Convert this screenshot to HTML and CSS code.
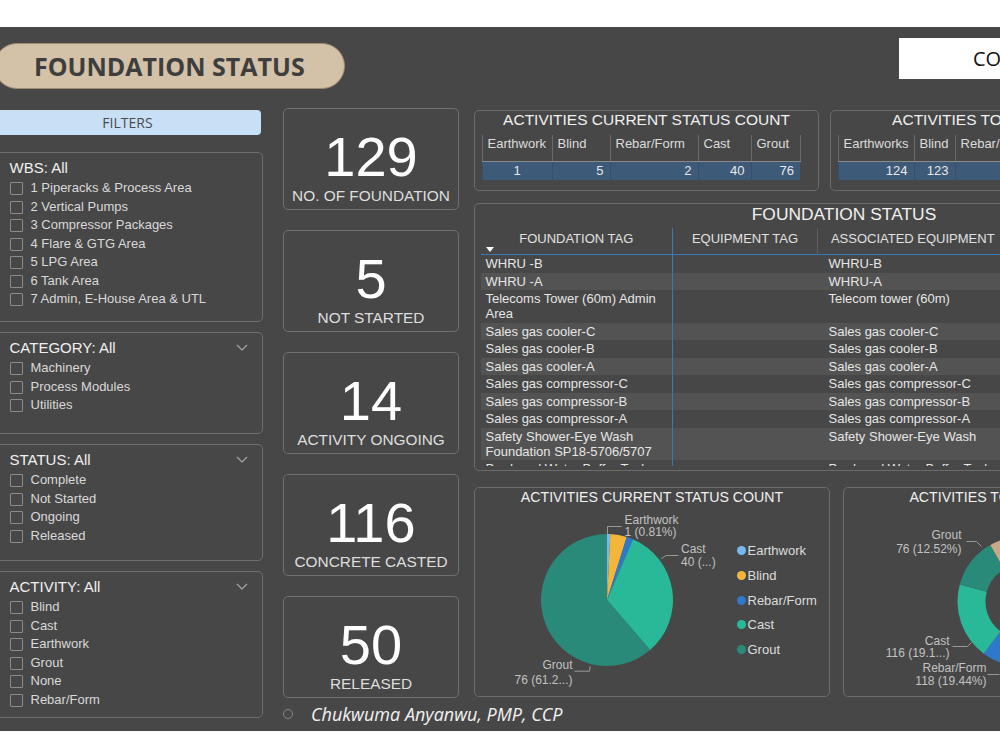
FILE: index.html
```html
<!DOCTYPE html>
<html lang="en">
<head>
    <meta charset="UTF-8">
    <title>Foundation Status</title>
    <link rel="stylesheet" href="styles.css">
</head>
<body>
    <div class="top-strip"></div>

    <main class="board">
        <header class="board-head">
            <h1 class="title-pill">FOUNDATION STATUS</h1>
            <div class="head-box">CONSTRUCTION PROGRESS</div>
        </header>

        <div class="board-body">
            <!-- slicers -->
            <aside class="filters">
                <div class="filters-btn">FILTERS</div>

                <section class="slicer slicer-wbs">
                    <div class="slicer-head"><span>WBS: All</span></div>
                    <ul class="slicer-list">
                        <li><span class="check"></span>1 Piperacks &amp; Process Area</li>
                        <li><span class="check"></span>2 Vertical Pumps</li>
                        <li><span class="check"></span>3 Compressor Packages</li>
                        <li><span class="check"></span>4 Flare &amp; GTG Area</li>
                        <li><span class="check"></span>5 LPG Area</li>
                        <li><span class="check"></span>6 Tank Area</li>
                        <li><span class="check"></span>7 Admin, E-House Area &amp; UTL</li>
                    </ul>
                </section>

                <section class="slicer slicer-category">
                    <div class="slicer-head">
                        <span>CATEGORY: All</span>
                        <svg class="chevron" width="12" height="7" viewBox="0 0 12 7"><polyline points="1,1 6,6 11,1"/></svg>
                    </div>
                    <ul class="slicer-list">
                        <li><span class="check"></span>Machinery</li>
                        <li><span class="check"></span>Process Modules</li>
                        <li><span class="check"></span>Utilities</li>
                    </ul>
                </section>

                <section class="slicer slicer-status">
                    <div class="slicer-head">
                        <span>STATUS: All</span>
                        <svg class="chevron" width="12" height="7" viewBox="0 0 12 7"><polyline points="1,1 6,6 11,1"/></svg>
                    </div>
                    <ul class="slicer-list">
                        <li><span class="check"></span>Complete</li>
                        <li><span class="check"></span>Not Started</li>
                        <li><span class="check"></span>Ongoing</li>
                        <li><span class="check"></span>Released</li>
                    </ul>
                </section>

                <section class="slicer slicer-activity">
                    <div class="slicer-head">
                        <span>ACTIVITY: All</span>
                        <svg class="chevron" width="12" height="7" viewBox="0 0 12 7"><polyline points="1,1 6,6 11,1"/></svg>
                    </div>
                    <ul class="slicer-list">
                        <li><span class="check"></span>Blind</li>
                        <li><span class="check"></span>Cast</li>
                        <li><span class="check"></span>Earthwork</li>
                        <li><span class="check"></span>Grout</li>
                        <li><span class="check"></span>None</li>
                        <li><span class="check"></span>Rebar/Form</li>
                    </ul>
                </section>
            </aside>

            <!-- kpi cards -->
            <div class="kpis">
                <div class="cards">
                    <div class="card"><div class="card-value">129</div><div class="card-label">NO. OF FOUNDATION</div></div>
                    <div class="card"><div class="card-value">5</div><div class="card-label">NOT STARTED</div></div>
                    <div class="card"><div class="card-value">14</div><div class="card-label">ACTIVITY ONGOING</div></div>
                    <div class="card"><div class="card-value">116</div><div class="card-label">CONCRETE CASTED</div></div>
                    <div class="card"><div class="card-value">50</div><div class="card-label">RELEASED</div></div>
                </div>
                <div class="credit"><span class="credit-dot"></span>Chukwuma Anyanwu, PMP, CCP</div>
            </div>

            <!-- tables and charts -->
            <div class="visuals">
                <div class="count-row">
                    <section class="panel count-panel count-current">
                        <h2 class="panel-title">ACTIVITIES CURRENT STATUS COUNT</h2>
                        <table class="count-table">
                            <tr><th>Earthwork</th><th>Blind</th><th>Rebar/Form</th><th>Cast</th><th>Grout</th></tr>
                            <tr><td class="centered">1</td><td>5</td><td>2</td><td>40</td><td>76</td></tr>
                        </table>
                    </section>
                    <section class="panel count-panel count-total">
                        <h2 class="panel-title">ACTIVITIES TOTAL COUNT</h2>
                        <table class="count-table">
                            <tr><th>Earthworks</th><th>Blind</th><th>Rebar/Form</th><th>Cast</th><th>Grout</th></tr>
                            <tr><td>124</td><td>123</td><td>118</td><td>116</td><td>76</td></tr>
                        </table>
                    </section>
                </div>

                <section class="panel status-panel">
                    <h2 class="panel-title status-title">FOUNDATION STATUS</h2>
                    <div class="status-scroll">
                        <table class="status-table">
                            <thead>
                                <tr>
                                    <th>FOUNDATION TAG<span class="sort-caret"></span></th>
                                    <th>EQUIPMENT TAG</th>
                                    <th>ASSOCIATED EQUIPMENT</th>
                                </tr>
                            </thead>
                            <tbody>
                                <tr><td>WHRU -B</td><td></td><td>WHRU-B</td></tr>
                                <tr><td>WHRU -A</td><td></td><td>WHRU-A</td></tr>
                                <tr><td>Telecoms Tower (60m) Admin Area</td><td></td><td>Telecom tower (60m)</td></tr>
                                <tr><td>Sales gas cooler-C</td><td></td><td>Sales gas cooler-C</td></tr>
                                <tr><td>Sales gas cooler-B</td><td></td><td>Sales gas cooler-B</td></tr>
                                <tr><td>Sales gas cooler-A</td><td></td><td>Sales gas cooler-A</td></tr>
                                <tr><td>Sales gas compressor-C</td><td></td><td>Sales gas compressor-C</td></tr>
                                <tr><td>Sales gas compressor-B</td><td></td><td>Sales gas compressor-B</td></tr>
                                <tr><td>Sales gas compressor-A</td><td></td><td>Sales gas compressor-A</td></tr>
                                <tr><td>Safety Shower-Eye Wash Foundation SP18-5706/5707</td><td></td><td>Safety Shower-Eye Wash</td></tr>
                                <tr><td>Produced Water Buffer Tank</td><td></td><td>Produced Water Buffer Tank</td></tr>
                            </tbody>
                        </table>
                    </div>
                </section>

                <div class="chart-row">
                    <section class="panel chart-panel pie-panel">
                        <h2 class="panel-title chart-title">ACTIVITIES CURRENT STATUS COUNT</h2>
                        <div class="chart-body">
                            <svg class="chart-svg" width="250" height="187" viewBox="0 0 250 187">
                                <g transform="translate(132 94)">
                                    <path class="slice-earthwork" d="M0 0 L0 -66 A66 66 0 0 1 3.34 -65.92 Z"/>
                                    <path class="slice-blind" d="M0 0 L3.34 -65.92 A66 66 0 0 1 19.76 -62.97 Z"/>
                                    <path class="slice-rebar" d="M0 0 L19.76 -62.97 A66 66 0 0 1 26.03 -60.65 Z"/>
                                    <path class="slice-cast" d="M0 0 L26.03 -60.65 A66 66 0 0 1 43 50.07 Z"/>
                                    <path class="slice-grout" d="M0 0 L43 50.07 A66 66 0 1 1 0 -66 Z"/>
                                </g>
                                <polyline class="leader" points="132.5,28.5 132.5,20.5 146.5,20.5"/>
                                <polyline class="leader" points="186.2,52.5 191.2,49.5 203.5,49.5"/>
                                <polyline class="leader" points="99.5,165.2 114.5,165.2 115.2,160.2"/>
                                <text class="chart-label" x="149.5" y="17.5">Earthwork</text>
                                <text class="chart-label" x="149.5" y="30">1 (0.81%)</text>
                                <text class="chart-label" x="206" y="46.5">Cast</text>
                                <text class="chart-label" x="206" y="59.5">40 (...)</text>
                                <text class="chart-label end" x="97.5" y="162.5">Grout</text>
                                <text class="chart-label end" x="97.5" y="177.5">76 (61.2...)</text>
                            </svg>
                            <ul class="legend">
                                <li><span class="legend-dot dot-earthwork"></span>Earthwork</li>
                                <li><span class="legend-dot dot-blind"></span>Blind</li>
                                <li><span class="legend-dot dot-rebar"></span>Rebar/Form</li>
                                <li><span class="legend-dot dot-cast"></span>Cast</li>
                                <li><span class="legend-dot dot-grout"></span>Grout</li>
                            </ul>
                        </div>
                    </section>

                    <section class="panel chart-panel donut-panel">
                        <h2 class="panel-title chart-title">ACTIVITIES TOTAL COUNT</h2>
                        <div class="chart-body">
                            <svg class="chart-svg" width="300" height="187" viewBox="0 0 300 187">
                                <g transform="translate(178.5 95.5)">
                                    <path class="slice-earthwork" d="M0 -65 A65 65 0 0 1 62.34 -18.42 L35.48 -10.49 A37 37 0 0 0 0 -37 Z"/>
                                    <path class="slice-blind" d="M62.34 -18.42 A65 65 0 0 1 35.89 54.19 L20.43 30.85 A37 37 0 0 0 35.48 -10.49 Z"/>
                                    <path class="slice-rebar" d="M35.89 54.19 A65 65 0 0 1 -38.64 52.27 L-21.99 29.76 A37 37 0 0 0 20.43 30.85 Z"/>
                                    <path class="slice-cast" d="M-38.64 52.27 A65 65 0 0 1 -62.71 -17.12 L-35.69 -9.75 A37 37 0 0 0 -21.99 29.76 Z"/>
                                    <path class="slice-grout" d="M-62.71 -17.12 A65 65 0 0 1 -32.16 -56.49 L-18.31 -32.15 A37 37 0 0 0 -35.69 -9.75 Z"/>
                                    <path class="slice-released" d="M-32.16 -56.49 A65 65 0 0 1 0 -65 L0 -37 A37 37 0 0 0 -18.31 -32.15 Z"/>
                                </g>
                                <polyline class="leader" points="122.5,35.5 132.5,35.5 137.5,40.5"/>
                                <polyline class="leader" points="108.5,140.5 123.5,140.5 127.5,136.5"/>
                                <polyline class="leader" points="143.5,168.5 155.5,168.5"/>
                                <text class="chart-label end" x="117.5" y="32.5">Grout</text>
                                <text class="chart-label end" x="117.5" y="46.5">76 (12.52%)</text>
                                <text class="chart-label end" x="105.5" y="138.5">Cast</text>
                                <text class="chart-label end" x="105.5" y="150.5">116 (19.1...)</text>
                                <text class="chart-label end" x="142.5" y="165.5">Rebar/Form</text>
                                <text class="chart-label end" x="142.5" y="178.5">118 (19.44%)</text>
                            </svg>
                        </div>
                    </section>
                </div>
            </div>
        </div>
    </main>
</body>
</html>
```

FILE: styles.css
```css
* {
    margin: 0;
    padding: 0;
    box-sizing: border-box;
}

body {
    width: 1000px;
    height: 750px;
    overflow: hidden;
    background: #fff;
    font-family: "Liberation Sans", Arial, sans-serif;
    color: #e6e6e6;
}

.top-strip {
    height: 27px;
}

.board {
    width: 1240px;
    height: 704px;
    margin-left: -6px;
    padding-top: 11px;
    background: #474747;
}

/* header */
.board-head {
    display: flex;
    align-items: flex-start;
}

.title-pill {
    width: 351px;
    height: 46px;
    margin-top: 5px;
    padding-left: 39px;
    display: flex;
    align-items: center;
    border-radius: 23px;
    background: #d3c1a8;
    border: 1.5px solid #a08c72;
    font-family: "Open Sans", sans-serif;
    font-weight: 700;
    font-size: 25px;
    color: #3e3e3e;
}

.head-box {
    margin-left: auto;
    width: 335px;
    height: 41px;
    padding-left: 74px;
    display: flex;
    align-items: center;
    background: #fff;
    color: #111;
    font-family: "Open Sans", sans-serif;
    font-size: 20px;
    white-space: nowrap;
}

.board-body {
    display: flex;
    align-items: flex-start;
    margin-top: 19px;
}

/* slicers */
.filters {
    width: 269px;
    margin-right: 20px;
}

.filters-btn {
    width: 267px;
    height: 25px;
    margin-top: 2px;
    border-radius: 4px;
    background: #c7e0f6;
    color: #4a4a4a;
    font-family: "Open Sans", sans-serif;
    font-size: 14px;
    line-height: 25px;
    text-align: center;
}

.slicer {
    margin-top: 10px;
    padding: 4.5px 14.5px 0;
    border: 1.5px solid #6e6e6e;
    border-radius: 5px;
}

.slicer-wbs { margin-top: 17px; height: 170px; }
.slicer-category { height: 102px; }
.slicer-status { height: 117px; }
.slicer-activity { height: 147px; }

.slicer-head {
    display: flex;
    justify-content: space-between;
    align-items: center;
    font-size: 15px;
    line-height: 20px;
    color: #f0f0f0;
}

.chevron {
    fill: none;
    stroke: #a8a8a8;
    stroke-width: 1.2;
}

.slicer-list {
    list-style: none;
    margin-top: 1.75px;
}

.slicer-list li {
    display: flex;
    align-items: center;
    font-size: 13px;
    line-height: 18.5px;
    color: #d9d9d9;
}

.check {
    width: 13px;
    height: 13px;
    margin-right: 8px;
    border: 1px solid #8c8c8c;
    border-radius: 1px;
}

/* kpi cards */
.kpis {
    width: 176px;
    margin-right: 15px;
}

.cards {
    display: flex;
    flex-direction: column;
    gap: 20px;
}

.card {
    height: 102px;
    padding-bottom: 4px;
    display: flex;
    flex-direction: column;
    justify-content: flex-end;
    align-items: center;
    border: 1.5px solid #707070;
    border-radius: 5px;
}

.card-value {
    font-size: 56px;
    line-height: 60px;
    color: #fff;
}

.card-label {
    font-size: 15.4px;
    line-height: 18px;
    color: #dedede;
    white-space: nowrap;
}

.credit {
    margin-top: 7px;
    display: flex;
    align-items: center;
    white-space: nowrap;
    font-family: "Open Sans", sans-serif;
    font-style: italic;
    font-size: 18px;
    line-height: 18px;
    color: #f2f2f2;
}

.credit-dot {
    flex-shrink: 0;
    width: 10px;
    height: 10px;
    margin-right: 18px;
    border: 1.5px solid #8a8a8a;
    border-radius: 50%;
}

/* visuals */
.visuals {
    width: 738px;
}

.panel {
    border: 1.5px solid #6c6c6c;
    border-radius: 5px;
}

.panel-title {
    font-weight: normal;
    font-size: 15.5px;
    line-height: 18px;
    text-align: center;
    color: #f0f0f0;
    white-space: nowrap;
}

.count-row {
    display: flex;
    gap: 11px;
    margin-top: 2px;
}

.count-panel {
    height: 81px;
}

.count-current { width: 345px; }
.count-total { width: 320px; }

.count-table {
    margin: 5.5px 0 0 6.5px;
    border-collapse: collapse;
    font-size: 13px;
}

.count-table th {
    height: 27px;
    padding: 1px 5px 0;
    vertical-align: top;
    text-align: left;
    font-weight: normal;
    line-height: 15px;
    color: #dcdcdc;
    border-left: 1px solid #6a6a6a;
    border-bottom: 1px solid #8a8a8a;
    white-space: nowrap;
}

.count-table th:last-child {
    border-right: 1px solid #6a6a6a;
}

.count-table td {
    height: 18px;
    padding: 0 6px;
    line-height: 18px;
    text-align: right;
    background: #3d5a78;
    color: #e8e8e8;
    border-left: 1px solid #36506b;
}

.count-table td.centered {
    text-align: center;
}

.count-current th:nth-child(1) { width: 70px; }
.count-current th:nth-child(2) { width: 58px; }
.count-current th:nth-child(3) { width: 88px; }
.count-current th:nth-child(4) { width: 53px; }
.count-current th:nth-child(5) { width: 49px; }

.count-total th:nth-child(1) { width: 74px; }
.count-total th:nth-child(2) { width: 41px; }
.count-total th:nth-child(3) { width: 82px; }
.count-total th:nth-child(4) { width: 50px; }
.count-total th:nth-child(5) { width: 50px; }

/* foundation table */
.status-panel {
    height: 268px;
    margin-top: 12px;
}

.status-title {
    font-size: 17.4px;
    line-height: 20px;
    padding-left: 2px;
}

.status-scroll {
    height: 238px;
    margin: 3.5px 0 0 5.5px;
    overflow: hidden;
}

.status-table {
    width: 527px;
    table-layout: fixed;
    border-collapse: collapse;
    font-size: 13px;
}

.status-table th {
    height: 27px;
    padding: 3px 5px 0;
    vertical-align: top;
    font-weight: normal;
    line-height: 15px;
    text-align: center;
    color: #e0e0e0;
    border-bottom: 1.5px solid #3a78b6;
    white-space: nowrap;
}

.status-table th:nth-child(1) { width: 192px; }
.status-table th:nth-child(2) { width: 145px; border-right: 1px solid #5e5e5e; }
.status-table th:nth-child(3) { width: 190px; }

.sort-caret {
    display: block;
    width: 0;
    height: 0;
    margin-top: 1px;
    border-left: 4px solid transparent;
    border-right: 4px solid transparent;
    border-top: 5px solid #fff;
}

.status-table td {
    padding: 1px 5px 1.5px;
    vertical-align: top;
    line-height: 15px;
    color: #e6e6e6;
}

.status-table td:nth-child(3) {
    padding-left: 11px;
}

.status-table td:first-child,
.status-table th:first-child {
    border-right: 1.5px solid #3a78b6;
}

.status-table tbody tr:nth-child(even) td {
    background: #535353;
}

/* charts */
.chart-row {
    display: flex;
    gap: 13px;
    margin-top: 16px;
}

.chart-panel {
    height: 210px;
}

.pie-panel { width: 356px; }
.donut-panel { width: 312px; }

.chart-title {
    font-size: 14.2px;
    line-height: 18px;
}

.chart-body {
    display: flex;
    align-items: flex-start;
}

.chart-svg {
    display: block;
    flex-shrink: 0;
}

.leader {
    fill: none;
    stroke: #9a9a9a;
    stroke-width: 1;
}

.chart-label {
    fill: #c2c2c2;
    font-family: "Liberation Sans", Arial, sans-serif;
    font-size: 12px;
}

.chart-label.end {
    text-anchor: end;
}

.slice-earthwork { fill: #78b8ea; }
.slice-blind { fill: #f3b63b; }
.slice-rebar { fill: #2f78cc; }
.slice-cast { fill: #29b898; }
.slice-grout { fill: #2a8a7a; }
.slice-released { fill: #c9a985; }

.legend {
    list-style: none;
    margin-top: 37px;
    padding-left: 11.5px;
    display: flex;
    flex-direction: column;
    gap: 9.75px;
    font-size: 13px;
    color: #dcdcdc;
}

.legend li {
    display: flex;
    align-items: center;
    line-height: 15px;
    white-space: nowrap;
}

.legend-dot {
    width: 9px;
    height: 9px;
    margin-right: 2px;
    border-radius: 50%;
}

.dot-earthwork { background: #78b8ea; }
.dot-blind { background: #f3b63b; }
.dot-rebar { background: #2f78cc; }
.dot-cast { background: #29b898; }
.dot-grout { background: #2a8a7a; }
```
